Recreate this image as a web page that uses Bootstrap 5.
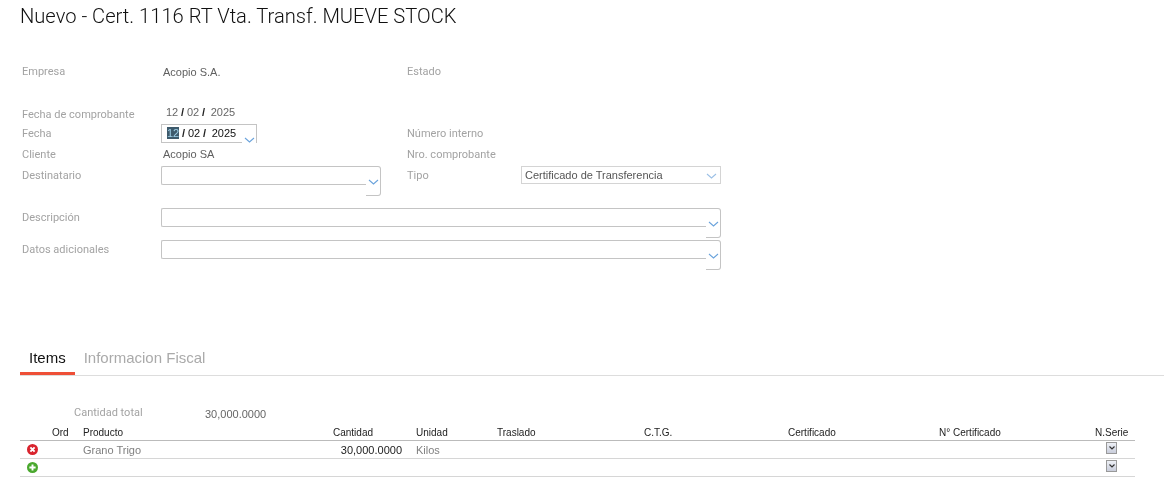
<!DOCTYPE html>
<html lang="es">
<head>
<meta charset="utf-8">
<title>Nuevo - Cert. 1116 RT Vta. Transf. MUEVE STOCK</title>
<link href="https://cdn.jsdelivr.net/npm/bootstrap@5.3.0/dist/css/bootstrap.min.css" rel="stylesheet">
<style>
html,body{overflow:hidden;height:487px}
body{font-family:"Liberation Sans",Arial,sans-serif;font-size:11px;color:#666;background:#fff}
.page-root{will-change:transform;height:487px}
.page-title{font-family:Roboto,sans-serif;font-weight:300;font-size:20.15px;line-height:26px;color:#111;margin:0 0 0 20px;padding-top:3px;height:29px}
.form-area{display:grid;grid-template-columns:139px 220px 26px 114px 200px;grid-template-rows:21px 22px 20px 21px 21px 42px 32px;margin:32px 0 0 22px;width:699px}
.lbl{font-family:Roboto,sans-serif;font-size:11px;line-height:14px;color:#a3a3a3;padding-top:3px}
.lbl-first{padding-top:4px}
.val{font-size:11px;line-height:14px;color:#606060;padding:2px 0 0 2px}
.val-first{padding-top:4px}
.c1{grid-column:1}.c2{grid-column:2}.c3{grid-column:4}.c4{grid-column:5}
.span-wide{grid-column:2 / 6}
.span-date{grid-row:2 / 4}
.lbl-fc{padding:0;margin-bottom:2px}
.date-ro{padding:0 0 5px 5px;color:#666;font-size:11px;line-height:14px;word-spacing:-.25px}
.date-ro b,.date-in b{font-weight:700;color:#222}
.date-in{color:#111;word-spacing:-.25px}
.sel-text{background:#3d5a6c;color:#9fd0e8}
.combo{display:flex;align-items:flex-start}
.combo-in{flex:1;height:19px;border:1px solid #c4c4c4;border-right:0;border-radius:2px 0 0 2px;background:#fff;padding:0 0 0 5px;line-height:17px;font-size:11px}
.combo-btn{width:15px;height:30px;border:1px solid #c4c4c4;border-left:0;border-radius:0 3px 3px 0;display:flex;justify-content:center;align-items:flex-start;padding-top:12px}
.combo-date{width:96px}
.combo-date .combo-btn{height:19px;border-bottom:0;border-radius:0;padding-top:12px}
.combo-date .combo-in{border-radius:0}
.combo-select{display:flex;justify-content:space-between;height:18px;border:1px solid #d4d4d4;padding:0 3px;line-height:16px;color:#555;font-size:11px}
.combo-select svg{margin-top:6px}
.tab-bar{display:flex;border-bottom:1px solid #ddd;margin:74px 0 0 20px;height:32px;font-size:15px}
.tab-on,.tab-off{line-height:27px;height:31px;padding:0 9px;text-decoration:none;display:block}
.tab-on{color:#111;border-bottom:3px solid #ee4f37}
.tab-off{color:#aaa}
.total-row{display:flex;margin:30px 0 0 74px;height:14px;line-height:14px}
.total-row .lbl{width:131px;padding-top:0}
.total-val{color:#666;font-size:11px;padding-top:1px}
.grid-items{width:1115px;margin:5px 0 0 20px;table-layout:fixed;border-collapse:collapse}
.grid-items col:nth-child(1){width:32px}
.grid-items col:nth-child(2){width:31px}
.grid-items col:nth-child(3){width:250px}
.grid-items col:nth-child(4){width:69px}
.grid-items col:nth-child(5){width:14px}
.grid-items col:nth-child(6){width:81px}
.grid-items col:nth-child(7){width:147px}
.grid-items col:nth-child(8){width:144px}
.grid-items col:nth-child(9){width:151px}
.grid-items col:nth-child(10){width:156px}
.grid-items th{font-weight:400;color:#222;height:15px;line-height:13px;padding:0;border-bottom:1px solid #bbb;font-size:10px}
.grid-items td{height:18px;padding:1px 0 0;border-bottom:1px solid #d6d6d6;color:#808080;font-size:11px;line-height:14px;vertical-align:middle}
.grid-items td.qty{color:#222;text-align:right;padding-right:14px}
.grid-items th.th-qty{text-align:right;padding-right:29px}
.grid-items th.th-serie{text-align:right;padding-right:7px}
.grid-items td.cell-ctl{padding:0}
.mini-btn{display:block;width:11px;height:12px;border:1px solid #999;background:linear-gradient(#eef0f6,#c9cddb);margin:0 0 2px 11px}
.mini-btn svg{display:block;margin:3px auto 0}
.ico{display:block;margin-left:7px}
</style>
</head>
<body>
<div class="page-root">
<h1 class="page-title">Nuevo - Cert. 1116 RT Vta. Transf. MUEVE STOCK</h1>
<div class="form-area">
  <div class="lbl lbl-first c1">Empresa</div><div class="val val-first c2">Acopio S.A.</div><div class="lbl lbl-first c3">Estado</div><div class="c4"></div>
  <div class="lbl lbl-fc c1 span-date d-flex align-items-end">Fecha de comprobante</div>
  <div class="c2 span-date d-flex align-items-end"><div class="date-ro">12 <b>/</b> 02 <b>/</b>&nbsp; 2025</div></div>
  <div class="lbl c1">Fecha</div>
  <div class="c2"><div class="combo combo-date"><div class="combo-in date-in"><span class="sel-text">12</span> <b>/</b> 02 <b>/</b>&nbsp; 2025</div><div class="combo-btn"><svg width="11" height="6" viewBox="0 0 11 6"><path d="M1 1l4.5 4L10 1" fill="none" stroke="#6aa3dc" stroke-width="1.1"/></svg></div></div></div>
  <div class="lbl c3">Número interno</div><div class="c4"></div>
  <div class="lbl c1">Cliente</div><div class="val c2">Acopio SA</div><div class="lbl c3">Nro. comprobante</div><div class="c4"></div>
  <div class="lbl c1">Destinatario</div>
  <div class="c2"><div class="combo"><div class="combo-in"></div><div class="combo-btn"><svg width="11" height="6" viewBox="0 0 11 6"><path d="M1 1l4.5 4L10 1" fill="none" stroke="#6aa3dc" stroke-width="1.1"/></svg></div></div></div>
  <div class="lbl c3">Tipo</div>
  <div class="c4"><div class="combo-select"><span>Certificado de Transferencia</span><svg width="11" height="6" viewBox="0 0 11 6"><path d="M1 1l4.5 4L10 1" fill="none" stroke="#9cc0e6" stroke-width="1.1"/></svg></div></div>
  <div class="lbl c1">Descripción</div>
  <div class="span-wide"><div class="combo"><div class="combo-in"></div><div class="combo-btn"><svg width="11" height="6" viewBox="0 0 11 6"><path d="M1 1l4.5 4L10 1" fill="none" stroke="#6aa3dc" stroke-width="1.1"/></svg></div></div></div>
  <div class="lbl c1">Datos adicionales</div>
  <div class="span-wide"><div class="combo"><div class="combo-in"></div><div class="combo-btn"><svg width="11" height="6" viewBox="0 0 11 6"><path d="M1 1l4.5 4L10 1" fill="none" stroke="#6aa3dc" stroke-width="1.1"/></svg></div></div></div>
</div>
<div class="tab-bar"><a class="tab-on" href="#">Items</a><a class="tab-off" href="#">Informacion Fiscal</a></div>
<div class="total-row"><div class="lbl">Cantidad total</div><div class="total-val">30,000.0000</div></div>
<table class="grid-items">
  <colgroup><col><col><col><col><col><col><col><col><col><col><col></colgroup>
  <thead><tr><th></th><th>Ord</th><th>Producto</th><th class="th-qty">Cantidad</th><th></th><th>Unidad</th><th>Traslado</th><th>C.T.G.</th><th>Certificado</th><th>N° Certificado</th><th class="th-serie">N.Serie</th></tr></thead>
  <tbody>
  <tr><td class="cell-ctl"><svg class="ico" width="11" height="11" viewBox="0 0 12 12"><circle cx="6" cy="6" r="6" fill="#d9232d"/><path d="M3.7 3.7l4.6 4.6M8.3 3.7L3.7 8.3" stroke="#fff" stroke-width="2.1"/></svg></td><td></td><td>Grano Trigo</td><td class="qty" colspan="2">30,000.0000</td><td>Kilos</td><td></td><td></td><td></td><td></td><td class="cell-ctl"><span class="mini-btn"><svg width="6" height="4" viewBox="0 0 6 4"><path d="M.5.5L3 3 5.5.5" fill="none" stroke="#333" stroke-width="1.2"/></svg></span></td></tr>
  <tr><td class="cell-ctl"><svg class="ico" width="11" height="11" viewBox="0 0 12 12"><circle cx="6" cy="6" r="6" fill="#4aa82e"/><path d="M6 2.6v6.8M2.6 6h6.8" stroke="#fff" stroke-width="2.1"/></svg></td><td></td><td></td><td colspan="2"></td><td></td><td></td><td></td><td></td><td></td><td class="cell-ctl"><span class="mini-btn"><svg width="6" height="4" viewBox="0 0 6 4"><path d="M.5.5L3 3 5.5.5" fill="none" stroke="#333" stroke-width="1.2"/></svg></span></td></tr>
  </tbody>
</table>
</div>
<script src="https://cdn.jsdelivr.net/npm/bootstrap@5.3.0/dist/js/bootstrap.bundle.min.js"></script>
</body>
</html>
